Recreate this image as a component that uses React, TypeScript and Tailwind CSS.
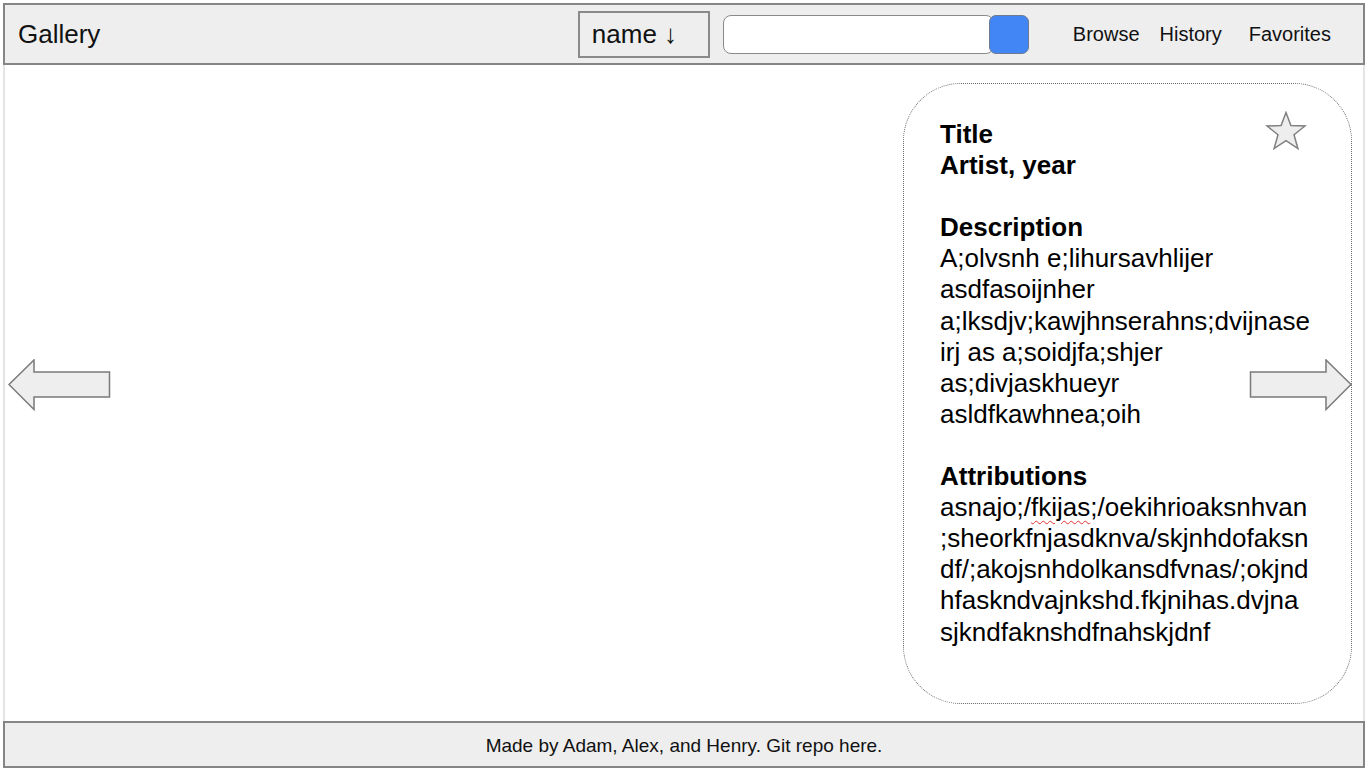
import React from 'react';

const description = [
  'A;olvsnh e;lihursavhlijer',
  'asdfasoijnher',
  'a;lksdjv;kawjhnserahns;dvijnase',
  'irj as a;soidjfa;shjer',
  'as;divjaskhueyr',
  'asldfkawhnea;oih',
];

const attributions = [
  ';sheorkfnjasdknva/skjnhdofaksn',
  'df/;akojsnhdolkansdfvnas/;okjnd',
  'hfaskndvajnkshd.fkjnihas.dvjna',
  'sjkndfaknshdfnahskjdnf',
];

function Arrow({ flip }: { flip?: boolean }) {
  return (
    <svg width="103" height="52" viewBox="0 0 103 52" className={flip ? 'scale-x-[-1]' : ''}>
      <path
        d="M1 25.5 L26 1 L26 13 L101.5 13 L101.5 38 L26 38 L26 50.5 Z"
        fill="#eeeeee"
        stroke="#7a7a7a"
        strokeWidth="1.5"
        strokeLinejoin="miter"
      />
    </svg>
  );
}

function Star() {
  return (
    <svg width="42" height="40" viewBox="0 0 42 40">
      <path
        d="M21 1.5 L25.9 14.6 L40 15 L29 23.7 L32.9 37.5 L21 29.6 L9.1 37.5 L13 23.7 L2 15 L16.1 14.6 Z"
        fill="#eeeeee"
        stroke="#808080"
        strokeWidth="1.5"
        strokeLinejoin="miter"
      />
    </svg>
  );
}

export default function App() {
  return (
    <div
      className="h-[768px] w-full bg-white pt-[3px] pl-[3px] pr-[2px] flex flex-col text-black"
      style={{ fontFamily: '"Liberation Sans", Arial, sans-serif' }}
    >
      {/* Header */}
      <header className="h-[62px] shrink-0 border-2 border-[#858585] bg-[#eeeeee] flex items-center">
        <div className="ml-[13px] text-[26px] text-[#111]">Gallery</div>
        <div className="flex-1" />
        <div className="w-[132px] h-[47px] border-2 border-[#8a8a8a] bg-[#eeeeee] flex items-center pl-[12px] text-[26px] text-[#111]">
          name ↓
        </div>
        <div className="ml-[13px] flex items-center">
          <div className="w-[271px] h-[39px] rounded-[8px] border-[1.5px] border-[#8a8a8a] bg-white" />
          <div className="-ml-[5px] w-[40px] h-[39px] rounded-[7px] border border-[#6f7c90] bg-[#4285f4]" />
        </div>
        <nav className="ml-[44px] mr-[32px] flex items-center text-[20px] text-[#111]">
          <span>Browse</span>
          <span className="ml-[20px]">History</span>
          <span className="ml-[27px]">Favorites</span>
        </nav>
      </header>

      {/* Main */}
      <main className="relative flex-1 border-x-2 border-[#e4e4e4] flex justify-end items-start">
        <div className="absolute left-[3px] top-[294px]">
          <Arrow />
        </div>

        <section className="relative mt-[18px] mr-[11px] w-[449px] h-[621px] rounded-[58px] border border-dotted border-[#6a6a6a] pl-[36px] pt-[35px] text-[26px] leading-[31.1px]">
          <div className="absolute right-[44px] top-[27px]">
            <Star />
          </div>
          <div className="font-bold">Title</div>
          <div className="font-bold">Artist, year</div>
          <div className="h-[31.1px]" />
          <div className="font-bold">Description</div>
          {description.map((line) => (
            <div key={line} className="whitespace-nowrap">
              {line}
            </div>
          ))}
          <div className="h-[31.1px]" />
          <div className="font-bold">Attributions</div>
          <div className="whitespace-nowrap">
            asnajo;/
            <span className="underline decoration-wavy decoration-[#e03030] decoration-1 underline-offset-[4px]">
              fkijas
            </span>
            ;/oekihrioaksnhvan
          </div>
          {attributions.map((line) => (
            <div key={line} className="whitespace-nowrap">
              {line}
            </div>
          ))}
        </section>

        <div className="absolute right-[11px] top-[294px]">
          <Arrow flip />
        </div>
      </main>

      {/* Footer */}
      <footer className="h-[47px] shrink-0 border-2 border-[#858585] bg-[#eeeeee] flex items-center justify-center pt-[4px] text-[19px] text-[#111]">
        Made by Adam, Alex, and Henry. Git repo here.
      </footer>
    </div>
  );
}
